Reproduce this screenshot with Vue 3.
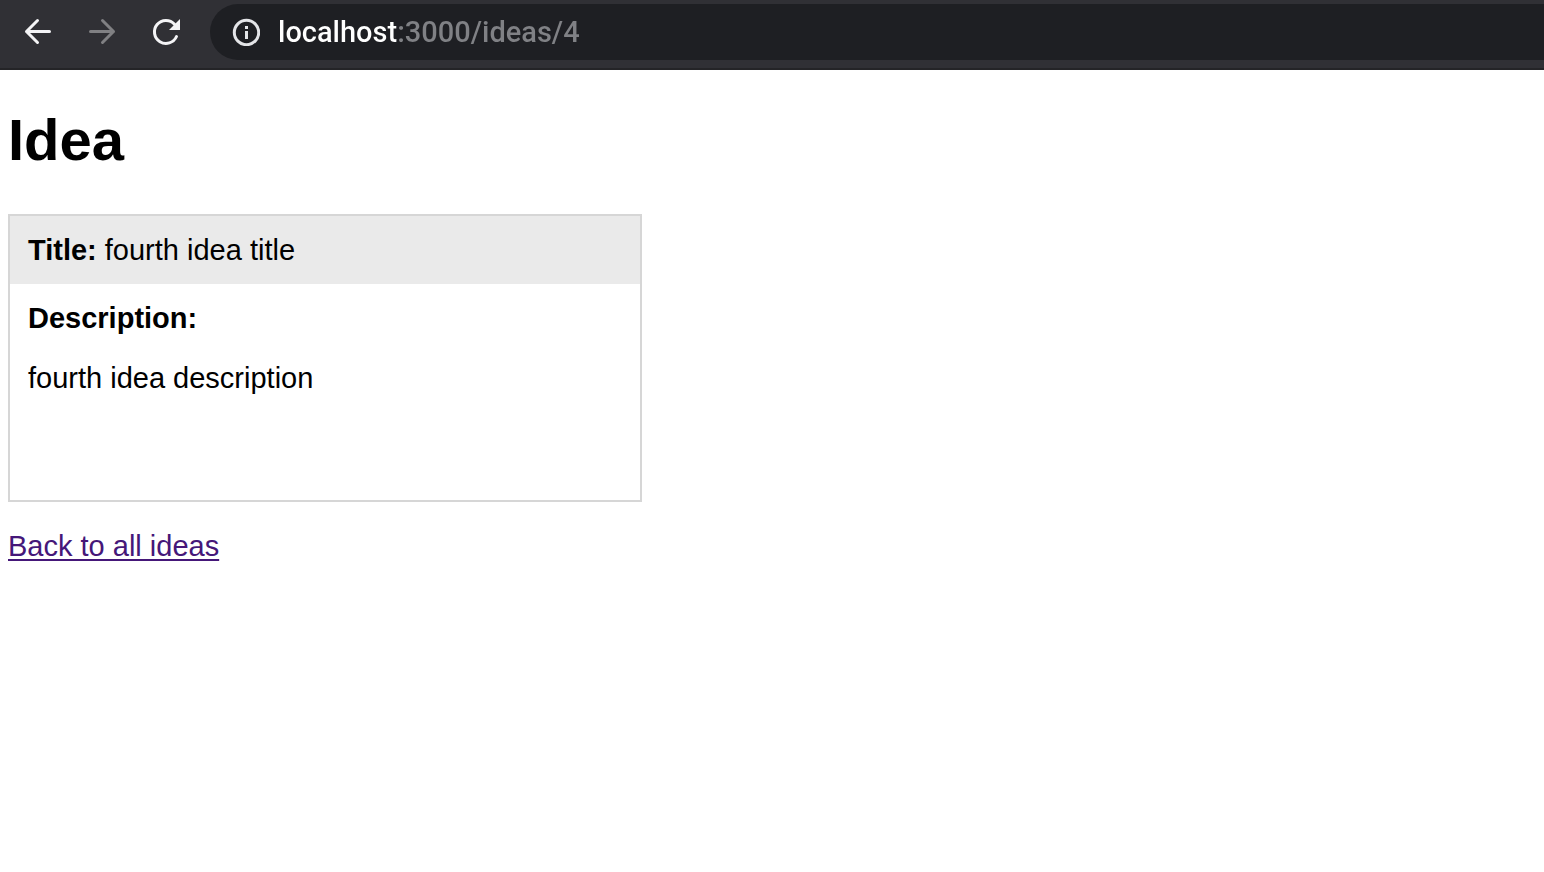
<script setup>
import { ref } from 'vue'

const address = ref('localhost:3000/ideas/4')
const idea = { title: 'fourth idea title', description: 'fourth idea description' }
</script>

<template>
  <header class="toolbar">
    <nav class="controls" aria-label="Browser navigation">
      <button type="button" aria-label="Back">
        <svg viewBox="0 0 32 32" aria-hidden="true">
          <path d="M27.500 15.500H4.500M15.500 4.500L4.500 15.500L15.500 26.500" />
        </svg>
      </button>
      <button type="button" class="inactive" aria-label="Forward" disabled>
        <svg viewBox="0 0 32 32" aria-hidden="true">
          <path d="M4.500 15.500H27.500M16.500 4.500L27.500 15.500L16.500 26.500" />
        </svg>
      </button>
      <button type="button" aria-label="Reload">
        <svg viewBox="0 0 32 32" aria-hidden="true">
          <path d="M24.500 8.200A11.500 11.500 0 1 0 26.500 20.500" />
          <path class="tip" d="M30 3V14H19Z" />
        </svg>
      </button>
    </nav>
    <div class="omnibox">
      <svg class="info" viewBox="0 0 28 28" aria-hidden="true">
        <circle cx="14.500" cy="14.500" r="12.200" />
        <path d="M14.500 13V21M14.500 8V11" />
      </svg>
      <input v-model="address" class="address" type="text" aria-label="Address" spellcheck="false" />
    </div>
  </header>

  <main class="page">
    <h1>Idea</h1>
    <article class="card">
      <div class="card-title"><strong>Title:</strong> {{ idea.title }}</div>
      <div class="card-body">
        <strong>Description:</strong>
        <p>{{ idea.description }}</p>
      </div>
    </article>
    <a href="#ideas">Back to all ideas</a>
  </main>
</template>

<style>
body {
  background: #fff;
}
</style>

<style scoped>
.toolbar {
  display: flex;
  gap: 12px;
  padding: 4px 0 8px 6px;
  background: #303035;
  border-bottom: 2px solid #242427;
}

.controls {
  display: flex;
}

.controls button {
  display: flex;
  align-items: center;
  justify-content: center;
  width: 64px;
  padding: 0;
  border: 0;
  background: none;
  color: #f4f4f6;
}

.controls .inactive {
  color: #808083;
}

.controls svg {
  width: 32px;
  height: 32px;
  fill: none;
  stroke: currentColor;
  stroke-width: 3;
  stroke-linecap: round;
  stroke-linejoin: round;
}

.controls .tip {
  fill: currentColor;
  stroke: none;
}

.omnibox {
  display: flex;
  flex: 1;
  align-items: center;
  gap: 18px;
  height: 56px;
  padding-left: 22px;
  border-radius: 28px 0 0 28px;
  background: #1e1f23;
}

.info {
  flex: none;
  width: 28px;
  height: 28px;
  fill: none;
  stroke: #e4e5e8;
  stroke-width: 3;
}

.address {
  flex: 1;
  min-width: 0;
  padding: 0;
  border: 0;
  outline: 0;
  background: linear-gradient(to right, #fff 120px, #808185 120px);
  background-clip: text;
  color: #fff;
  -webkit-text-fill-color: transparent;
  font: 500 29px/40px Roboto, sans-serif;
}

.page {
  padding: 38px 8px;
  color: #000;
  font: 29px/32px "Liberation Sans", Arial, sans-serif;
}

h1 {
  margin: 0 0 42px;
  font-size: 58px;
  line-height: 64px;
}

.card {
  box-sizing: border-box;
  max-width: 634px;
  min-height: 288px;
  margin-bottom: 28px;
  border: 2px solid #d6d6d6;
}

.card-title {
  padding: 18px;
  background: #eaeaea;
}

.card-body {
  padding: 18px;
}

.card-body p {
  margin: 28px 0 0;
}

a {
  color: #451779;
  text-decoration-thickness: 2px;
  text-underline-offset: 3px;
}
</style>
